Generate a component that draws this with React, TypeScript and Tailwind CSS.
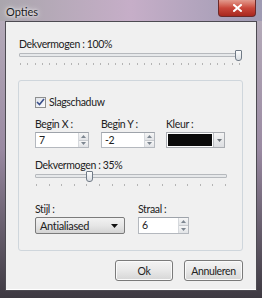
import React from "react";

const font = "font-['Lato','Noto_Sans',sans-serif]";
const txt = "text-[10.5px] leading-[14px] tracking-[-0.35px] text-[#222]";

function Ticks({ count }: { count: number }) {
  return (
    <div className="absolute left-[1px] right-[1px] top-[12px] flex justify-between">
      {Array.from({ length: count }).map((_, i) => (
        <span key={i} className="block h-[2px] w-[1px] bg-[#b4b4b4]" />
      ))}
    </div>
  );
}

function Slider({ className, thumb, ticks }: { className: string; thumb: string; ticks: number }) {
  return (
    <div className={`relative h-[16px] ${className}`}>
      <div className="absolute left-0 right-0 top-[2px] h-[4px] rounded-[1px] border border-[#b6b9bd] bg-[#e6e8ea]" />
      <div
        className={`absolute top-[-1px] h-[11px] w-[7px] rounded-b-[3px] rounded-t-[1px] border border-[#707a86] bg-gradient-to-b from-[#fdfdfd] to-[#d9dde2] ${thumb}`}
      />
      <Ticks count={ticks} />
    </div>
  );
}

function Spinner() {
  return (
    <div className="flex w-[10px] flex-col border-l border-[#d6d9dd]">
      <div className="flex flex-1 items-center justify-center border-b border-[#c9ccd0] bg-gradient-to-b from-[#f6f6f6] to-[#e2e4e7]">
        <svg width="5" height="3" viewBox="0 0 5 3">
          <path d="M0 3 L2.5 0 L5 3 Z" fill="#7d8690" />
        </svg>
      </div>
      <div className="flex flex-1 items-center justify-center bg-gradient-to-b from-[#f6f6f6] to-[#e2e4e7]">
        <svg width="5" height="3" viewBox="0 0 5 3">
          <path d="M0 0 L2.5 3 L5 0 Z" fill="#7d8690" />
        </svg>
      </div>
    </div>
  );
}

function SpinBox({ value, className }: { value: string; className: string }) {
  return (
    <div className={`flex h-[16px] border border-[#b4b8be] border-t-[#9ea3aa] bg-white ${className}`}>
      <div className={`flex-1 pl-[3px] ${txt}`}>{value}</div>
      <Spinner />
    </div>
  );
}

function Button({ label, className }: { label: string; className: string }) {
  return (
    <div
      className={`flex h-[21px] items-center justify-center rounded-[3px] border border-[#7a7a7a] bg-gradient-to-b from-[#f3f3f3] via-[#e8e8e8] to-[#d6d6d6] shadow-[inset_0_0_0_1px_#fafafa] ${txt} ${className}`}
    >
      {label}
    </div>
  );
}

export default function App() {
  return (
    <div
      className={`relative flex h-[298px] w-[262px] flex-col overflow-hidden bg-gradient-to-b from-[#b9b0bd] via-[#9a8aa2] to-[#3e3a42] ${font}`}
    >
      <div className="flex h-[21px] items-start justify-between bg-gradient-to-r from-[#aaa6ad] via-[#c6aec8] to-[#9f9bb3]">
        <span className="pl-[6px] pt-[5px] text-[11px] leading-[14px] text-[#1b1b1b] [text-shadow:0_0_6px_#ffffff,0_0_3px_#ffffff]">
          Opties
        </span>
        <div className="mr-[6px] flex h-[17px] w-[38px] items-center justify-center rounded-b-[4px] border border-t-0 border-[#6b2a2a] bg-gradient-to-b from-[#e29a8e] via-[#c9473b] to-[#a8271e]">
          <svg width="9" height="8" viewBox="0 0 9 8">
            <path d="M1 1 L8 7 M8 1 L1 7" stroke="#ffffff" strokeWidth="2" strokeLinecap="square" />
          </svg>
        </div>
      </div>

      <div className="mx-[5px] mb-[7px] flex flex-1 flex-col border border-[#4d4b52] bg-[#f0f0f0] shadow-[inset_0_-1px_0_#ffffff]">
        <div className={`pl-[13px] pt-[15px] ${txt}`}>Dekvermogen : 100%</div>
        <Slider className="ml-[13px] w-[222px]" thumb="left-[216px]" ticks={31} />

        <div className="ml-[12px] mt-[13px] flex h-[171px] w-[225px] flex-col rounded-[3px] border border-[#cfd6dc] pl-[16px]">
          <div className="mt-[14px] flex h-[14px] items-center gap-[3px]">
            <div className="flex h-[11px] w-[11px] items-center justify-center border border-[#8e8f8f] bg-gradient-to-br from-[#dfe3ea] to-[#fbfbfc]">
              <svg width="9" height="8" viewBox="0 0 9 8">
                <path d="M1 4 L3.5 6.5 L8 1" stroke="#3a4f8a" strokeWidth="1.6" fill="none" />
              </svg>
            </div>
            <span className={txt}>Slagschaduw</span>
          </div>

          <div className={`mt-[8px] flex ${txt}`}>
            <span className="w-[66px]">Begin X :</span>
            <span className="w-[65px]">Begin Y :</span>
            <span>Kleur :</span>
          </div>
          <div className="mt-[1px] flex">
            <SpinBox value="7" className="w-[54px]" />
            <SpinBox value="-2" className="ml-[12px] w-[54px]" />
            <div className="ml-[11px] flex h-[16px] w-[59px] border border-[#a9acb1] bg-white">
              <div className="m-[1px] flex-1 bg-[#0b0b0b]" />
              <div className="flex w-[11px] items-center justify-center border-l border-[#b9bcc0] bg-gradient-to-b from-[#f4f4f4] to-[#dcdee1]">
                <svg width="5" height="3" viewBox="0 0 5 3">
                  <path d="M0 0 L2.5 3 L5 0 Z" fill="#6d737a" />
                </svg>
              </div>
            </div>
          </div>

          <div className={`mt-[10px] ${txt}`}>Dekvermogen : 35%</div>
          <Slider className="w-[192px]" thumb="left-[51px]" ticks={16} />

          <div className={`mt-[14px] flex ${txt}`}>
            <span className="w-[103px]">Stijl :</span>
            <span>Straal :</span>
          </div>
          <div className="mt-[1px] flex">
            <div
              className={`flex h-[17px] w-[90px] items-center justify-between rounded-[2px] border border-[#7b7b7b] bg-gradient-to-b from-[#f2f2f2] via-[#e6e6e6] to-[#d3d3d3] pl-[4px] pr-[6px] ${txt}`}
            >
              <span className="text-[11px]">Antialiased</span>
              <svg width="7" height="4" viewBox="0 0 7 4">
                <path d="M0 0 L3.5 4 L7 0 Z" fill="#111" />
              </svg>
            </div>
            <SpinBox value="6" className="ml-[13px] h-[17px] w-[51px]" />
          </div>
        </div>

        <div className="ml-[109px] mt-[9px] flex gap-[11px]">
          <Button label="Ok" className="w-[58px]" />
          <Button label="Annuleren" className="w-[59px]" />
        </div>
      </div>
    </div>
  );
}
